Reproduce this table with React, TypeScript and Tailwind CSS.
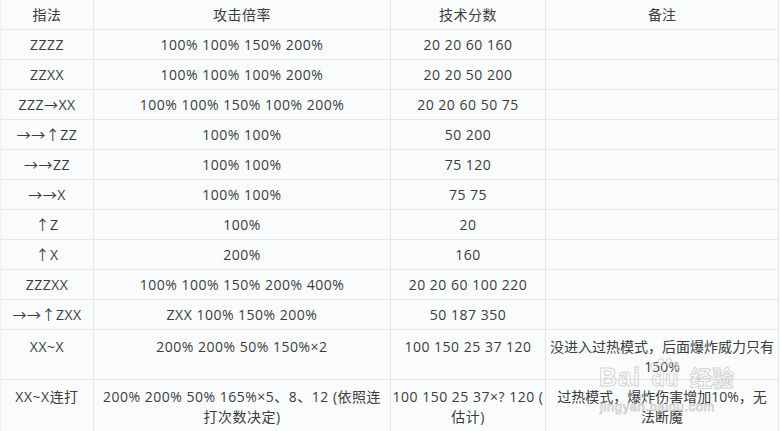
import React from 'react';

// 指法 / 攻击倍率 / 技术分数 / 备注
const rows: [string, string, string, string, number][] = [
  ['ZZZZ', '100% 100% 150% 200%', '20 20 60 160', '', 30],
  ['ZZXX', '100% 100% 100% 200%', '20 20 50 200', '', 30],
  ['ZZZ→XX', '100% 100% 150% 100% 200%', '20 20 60 50 75', '', 30],
  ['→→↑ZZ', '100% 100%', '50 200', '', 30],
  ['→→ZZ', '100% 100%', '75 120', '', 30],
  ['→→X', '100% 100%', '75 75', '', 30],
  ['↑Z', '100%', '20', '', 30],
  ['↑X', '200%', '160', '', 30],
  ['ZZZXX', '100% 100% 150% 200% 400%', '20 20 60 100 220', '', 30],
  ['→→↑ZXX', 'ZXX 100% 150% 200%', '50 187 350', '', 30],
  ['XX~X', '200% 200% 50% 150%×2', '100 150 25 37 120', '没进入过热模式，后面爆炸威力只有\n150%', 50],
  ['XX~X连打', '200% 200% 50% 165%×5、8、12 (依照连\n打次数决定)', '100 150 25 37×? 120 (\n估计)', '过热模式，爆炸伤害增加10%，无\n法断魔', 52],
];

const widths = ['w-[93px]', 'w-[297px]', 'w-[155px]', 'w-[233px]'];

function Cell({ text, i, h }: { text: string; i: number; h: number }) {
  const multi = h > 30;
  return (
    <div
      className={`${widths[i]} shrink-0 border-r border-b border-[#e1e7eb] flex justify-center text-center leading-[20px] whitespace-pre ${
        i === 3 ? '' : 'tracking-[0.5px]'
      } ${multi ? 'items-start pt-[7px]' : 'items-center'}`}
      style={{ height: h }}
    >
      {text}
    </div>
  );
}

export default function App() {
  return (
    <div className="relative w-[782px] h-[431px] overflow-hidden bg-white">
      <div
        className="w-[778px] bg-[#f9fbfc] text-[#3c3c3c] text-[14px] border-l border-[#eef2f4]"
        style={{ fontFamily: '"Open Sans", "Noto Sans CJK SC", sans-serif' }}
      >
        <div className="flex">
          {['指法', '攻击倍率', '技术分数', '备注'].map((t, i) => (
            <Cell key={t} text={t} i={i} h={30} />
          ))}
        </div>
        {rows.map((r) => (
          <div key={r[0]} className="flex">
            {r.slice(0, 4).map((t, i) => (
              <Cell key={i} text={t as string} i={i} h={r[4]} />
            ))}
          </div>
        ))}
      </div>

      {/* watermark */}
      <div
        className="absolute left-[599px] top-[364px] select-none pointer-events-none text-[rgba(255,255,255,0.35)]"
        style={{ fontFamily: '"Liberation Sans", "Noto Sans CJK SC", sans-serif', WebkitTextStroke: '1px rgba(185,185,185,0.6)' }}
      >
        <div className="flex items-end leading-none h-[26px]">
          <span className="text-[25px] font-bold tracking-[1px]">Bai</span>
          <span className="relative ml-[3px] w-[42px] h-[24px] flex items-end justify-center">
            <svg width="30" height="12" viewBox="0 0 30 12" className="absolute left-[6px] top-[-8px]">
              <g fill="rgba(255,255,255,0.35)" stroke="rgba(185,185,185,0.6)" strokeWidth="1">
                <ellipse cx="4" cy="8" rx="3" ry="3.5" />
                <ellipse cx="11" cy="4" rx="3" ry="3.5" />
                <ellipse cx="19" cy="4" rx="3" ry="3.5" />
                <ellipse cx="26" cy="8" rx="3" ry="3.5" />
              </g>
            </svg>
            <span className="text-[22px] font-bold">du</span>
          </span>
          <span className="ml-[4px] text-[22px] font-bold">经验</span>
        </div>
        <div className="text-[13px] tracking-[0.6px] mt-[10px] ml-[1px] leading-none">jingyan.baidu.com</div>
      </div>
    </div>
  );
}
